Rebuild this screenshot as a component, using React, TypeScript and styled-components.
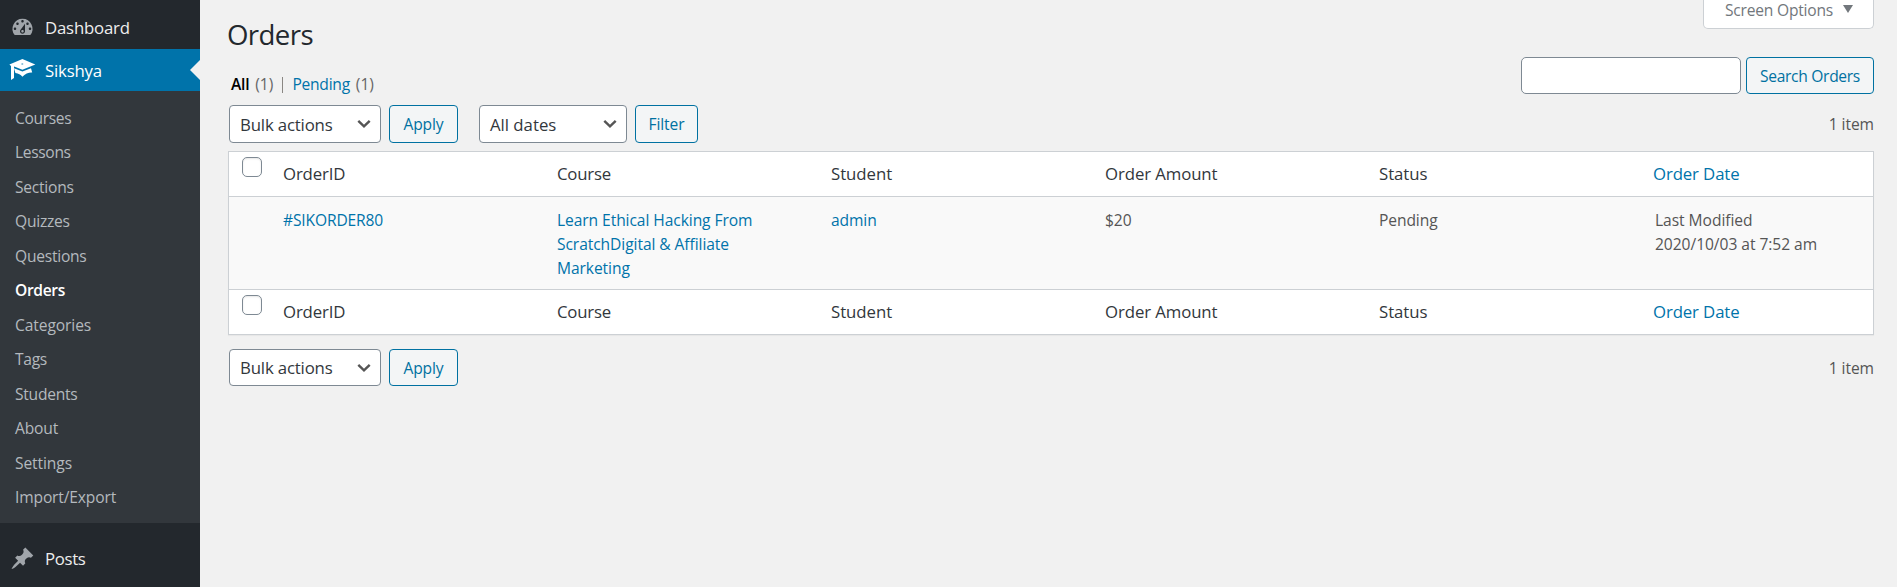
import React from 'react';
import styled, { createGlobalStyle } from 'styled-components';

const GlobalStyle = createGlobalStyle`
  *, *::before, *::after { box-sizing: border-box; }
  body {
    margin: 0;
    background: #f1f1f1;
    color: #444;
    font-family: 'Open Sans', 'Noto Sans', sans-serif;
    font-size: 15.6px;
    overflow: hidden;
  }
  a { color: #0073aa; text-decoration: none; }
`;

const Page = styled.div`
  display: flex;
  height: 587px;
  overflow: hidden;
`;

/* Sidebar */

const Sidebar = styled.nav`
  flex: 0 0 200px;
  padding-top: 6px;
  background: #23282d;
`;

const MenuItem = styled.a<{ $active?: boolean; $gap?: number; $ls?: number }>`
  position: relative;
  display: flex;
  align-items: center;
  height: 42px;
  margin-top: ${(p) => p.$gap ?? 0}px;
  padding-left: 9px;
  background: ${(p) => (p.$active ? '#0073aa' : 'transparent')};
  color: ${(p) => (p.$active ? '#fff' : '#eee')};
  font-size: 16.8px;
  letter-spacing: ${(p) => p.$ls ?? 0}px;

  svg {
    flex: none;
    margin-right: 9px;
    fill: ${(p) => (p.$active ? '#fff' : '#a0a5aa')};
  }
`;

const MenuArrow = styled.span`
  position: absolute;
  right: 0;
  top: 11px;
  border: 10px solid transparent;
  border-left: 0;
  border-right-color: #f1f1f1;
`;

const Submenu = styled.ul`
  margin: 0;
  padding: 9.5px 0 8.5px;
  list-style: none;
  background: #32373c;
`;

const SubmenuItem = styled.li<{ $current?: boolean; $ls: number }>`
  height: 34.5px;
  padding-left: 15px;
  line-height: 34.5px;
  color: ${(p) => (p.$current ? '#fff' : '#b4b9be')};
  font-weight: ${(p) => (p.$current ? 600 : 400)};
  letter-spacing: ${(p) => p.$ls}px;
`;

/* Main area */

const Main = styled.main`
  flex: 1;
  padding: 0 23px 0 28px;
`;

const TopBar = styled.header`
  display: flex;
  justify-content: space-between;
  align-items: flex-start;
  height: 57px;
`;

const Title = styled.h1`
  margin: 17px 0 0 -1px;
  font-size: 27.6px;
  font-weight: 400;
  line-height: 34px;
  letter-spacing: -0.6px;
  color: #23282d;
`;

const ScreenOptions = styled.button`
  display: flex;
  align-items: center;
  justify-content: space-between;
  width: 171px;
  height: 29px;
  padding: 0 20px 8px 21px;
  border: 1px solid #ccd0d4;
  border-top: 0;
  border-radius: 0 0 5px 5px;
  background: #fff;
  color: #72777c;
  font: inherit;
  letter-spacing: -0.22px;

  svg { margin-bottom: 3px; }
`;

const FilterRow = styled.div`
  display: flex;
  justify-content: space-between;
  align-items: flex-end;
  height: 37px;
`;

const StatusLinks = styled.div`
  display: flex;
  padding-left: 3px;
  line-height: 20px;
  color: #666;
`;

const StatusLink = styled.a<{ $current?: boolean }>`
  margin-right: 6px;
  color: ${(p) => (p.$current ? '#000' : '#0073aa')};
  font-weight: ${(p) => (p.$current ? 600 : 400)};
  letter-spacing: -0.25px;
`;

const Divider = styled.span`
  width: 1px;
  height: 16px;
  margin: 3px 9px 0 9px;
  background: #8a8783;
`;

const SearchForm = styled.form`
  display: flex;
  gap: 5px;
`;

const SearchInput = styled.input`
  width: 220px;
  height: 37px;
  padding: 0 10px;
  border: 1px solid #7e8993;
  border-radius: 5px;
  background: #fff;
  font: inherit;
`;

const Button = styled.button<{ $width: number; $ls?: number }>`
  width: ${(p) => p.$width}px;
  align-self: stretch;
  padding: 0;
  border: 1px solid #0071a1;
  border-radius: 4px;
  background: #f3f5f6;
  color: #0071a1;
  font: inherit;
  letter-spacing: ${(p) => p.$ls ?? 0}px;
  white-space: nowrap;
`;

const Toolbar = styled.div<{ $height: number; $top: number }>`
  display: flex;
  align-items: center;
  gap: 8px;
  height: ${(p) => p.$height}px;
  margin-top: ${(p) => p.$top}px;
  padding-left: 1px;
`;

const SelectBox = styled.div<{ $width: number; $ls: number }>`
  display: flex;
  align-items: center;
  justify-content: space-between;
  align-self: stretch;
  width: ${(p) => p.$width}px;
  padding: 0 9px 0 10px;
  border: 1px solid #7e8993;
  border-radius: 4px;
  background: #fff;
  color: #32373c;
  font-size: 16.8px;
  letter-spacing: ${(p) => p.$ls}px;
`;

const DateFilters = styled.div`
  display: flex;
  align-self: stretch;
  gap: 8px;
  margin-left: 13px;
`;

const ItemCount = styled.span<{ $lift?: boolean }>`
  margin-left: auto;
  padding-bottom: ${(p) => (p.$lift ? 1 : 0)}px;
  color: #555;
  letter-spacing: -0.05px;
`;

/* Orders table */

const Table = styled.div`
  margin-top: 8px;
  border: 1px solid #ccd0d4;
  background: #fff;
  box-shadow: 0 1px 1px rgba(0, 0, 0, 0.04);
`;

const Row = styled.div`
  display: grid;
  grid-template-columns: 44px repeat(5, 274px) 1fr;
`;

const HeadRow = styled(Row)`
  height: 44px;
  color: #32373c;
  font-size: 16.8px;
  line-height: 44px;
`;

const BodyRow = styled(Row)`
  height: 94px;
  padding-top: 11px;
  border: solid #ccd0d4;
  border-width: 1px 0;
  background: #f9f9f9;
  color: #555;
  line-height: 24px;
`;

const Cell = styled.div<{ $ls?: number; $indent?: number }>`
  padding: 0 10px 0 ${(p) => p.$indent ?? 10}px;
  letter-spacing: ${(p) => p.$ls ?? -0.05}px;
  white-space: nowrap;
`;

const Checkbox = styled.input`
  appearance: none;
  display: block;
  width: 20px;
  height: 20px;
  margin: 5px 0 0 13px;
  border: 1px solid #7e8993;
  border-radius: 5px;
  background: #fff;
  box-shadow: inset 0 1px 2px rgba(0, 0, 0, 0.1);
`;

const DashboardIcon = () => (
  <svg width="27" height="25" viewBox="-0.8 0 21.6 20">
    <path fillRule="evenodd" d="M3.76 16h12.48A7.998 7.998 0 0 0 10 3a7.998 7.998 0 0 0-6.24 13zM10 4c.55 0 1 .45 1 1s-.45 1-1 1-1-.45-1-1 .45-1 1-1zM6 6c.55 0 1 .45 1 1s-.45 1-1 1-1-.45-1-1 .45-1 1-1zm8 0c.55 0 1 .45 1 1s-.45 1-1 1-1-.45-1-1 .45-1 1-1zm-5.37 5.55L12 7v6c0 1.1-.9 2-2 2s-2-.9-2-2c0-.57.24-1.08.63-1.45zM4 10c.55 0 1 .45 1 1s-.45 1-1 1-1-.45-1-1 .45-1 1-1zm12 0c.55 0 1 .45 1 1s-.45 1-1 1-1-.45-1-1 .45-1 1-1zm-5 3c0-.55-.45-1-1-1s-1 .45-1 1 .45 1 1 1 1-.45 1-1z" />
  </svg>
);

const GraduationIcon = () => (
  <svg width="27" height="25" viewBox="0 0 27 25">
    <path d="M0.4 6.4L13.4 1L26.3 6.6L13.4 11.8L5.2 8.6L5 9V20L2 22V8z" />
    <path d="M5 10.2L13.4 13.6L22 10.2L23.2 14.5C20.2 14.2 16 15.7 13.4 18.8C11.6 16.5 9.5 15.3 6.4 15z" />
    <ellipse cx="13.3" cy="6" rx="1.1" ry="0.8" fill="#5ba5ca" />
  </svg>
);

const PinIcon = () => (
  <svg width="27" height="25" viewBox="-0.8 0 21.6 20">
    <path d="M10.44 3.02l1.82-1.82 6.36 6.35-1.83 1.82c-1.05-.68-2.48-.57-3.41.36l-.75.75c-.92.93-1.04 2.35-.35 3.41l-1.83 1.82-2.41-2.41-2.8 2.79c-.42.42-3.38 2.71-3.8 2.29s1.86-3.39 2.28-3.81l2.79-2.79L4.1 9.36l1.83-1.82c1.05.69 2.48.57 3.4-.36l.75-.75c.93-.92 1.05-2.35.36-3.41z" />
  </svg>
);

const Chevron = () => (
  <svg width="14" height="10" viewBox="0 0 14 10">
    <path d="M1.3 1.8L7 7.4L12.7 1.8" fill="none" stroke="#555" strokeWidth="2.4" />
  </svg>
);

const Triangle = () => (
  <svg width="10" height="8" viewBox="0 0 10 8">
    <path d="M0 0H10L5 8z" fill="#72777c" />
  </svg>
);

const submenu: [string, number][] = [
  ['Courses', -0.35],
  ['Lessons', -0.35],
  ['Sections', -0.25],
  ['Quizzes', -0.25],
  ['Questions', -0.25],
  ['Orders', -0.35],
  ['Categories', -0.1],
  ['Tags', -0.3],
  ['Students', -0.25],
  ['About', -0.15],
  ['Settings', -0.1],
  ['Import/Export', -0.15],
];

const TableHeadings = () => (
  <HeadRow>
    <Checkbox type="checkbox" aria-label="Select all" />
    <Cell $ls={-0.15}>OrderID</Cell>
    <Cell $ls={-0.2}>Course</Cell>
    <Cell>Student</Cell>
    <Cell $ls={-0.1}>Order Amount</Cell>
    <Cell>Status</Cell>
    <Cell $ls={-0.12}><a>Order Date</a></Cell>
  </HeadRow>
);

const BulkActions = () => (
  <>
    <SelectBox $width={152} $ls={-0.16}>Bulk actions<Chevron /></SelectBox>
    <Button $width={69} $ls={-0.1}>Apply</Button>
  </>
);

export default function App() {
  return (
    <>
      <GlobalStyle />
      <Page>
        <Sidebar>
          <MenuItem $ls={-0.2}><DashboardIcon />Dashboard</MenuItem>
          <MenuItem $active $gap={1} $ls={-0.19}><GraduationIcon />Sikshya<MenuArrow /></MenuItem>
          <Submenu>
            {submenu.map(([label, ls]) => (
              <SubmenuItem key={label} $ls={ls} $current={label === 'Orders'}>{label}</SubmenuItem>
            ))}
          </Submenu>
          <MenuItem $gap={14} $ls={-0.35}><PinIcon />Posts</MenuItem>
        </Sidebar>
        <Main>
          <TopBar>
            <Title>Orders</Title>
            <ScreenOptions>Screen Options<Triangle /></ScreenOptions>
          </TopBar>
          <FilterRow>
            <StatusLinks>
              <StatusLink $current>All</StatusLink>(1)<Divider />
              <StatusLink>Pending</StatusLink>(1)
            </StatusLinks>
            <SearchForm>
              <SearchInput type="search" aria-label="Search Orders" />
              <Button type="button" $width={128} $ls={-0.31}>Search Orders</Button>
            </SearchForm>
          </FilterRow>
          <Toolbar $height={38} $top={11}>
            <BulkActions />
            <DateFilters>
              <SelectBox $width={148} $ls={-0.02}>All dates<Chevron /></SelectBox>
              <Button $width={63} $ls={-0.1}>Filter</Button>
            </DateFilters>
            <ItemCount $lift>1 item</ItemCount>
          </Toolbar>
          <Table>
            <TableHeadings />
            <BodyRow>
              <span />
              <Cell $ls={-0.15}><a>#SIKORDER80</a></Cell>
              <Cell $ls={-0.08}><a>Learn Ethical Hacking From<br />ScratchDigital &amp; Affiliate<br />Marketing</a></Cell>
              <Cell $ls={-0.1}><a>admin</a></Cell>
              <Cell $ls={-0.1}>$20</Cell>
              <Cell $ls={-0.1}>Pending</Cell>
              <Cell $indent={12}>Last Modified<br />2020/10/03 at 7:52 am</Cell>
            </BodyRow>
            <TableHeadings />
          </Table>
          <Toolbar $height={37} $top={14}>
            <BulkActions />
            <ItemCount>1 item</ItemCount>
          </Toolbar>
        </Main>
      </Page>
    </>
  );
}
